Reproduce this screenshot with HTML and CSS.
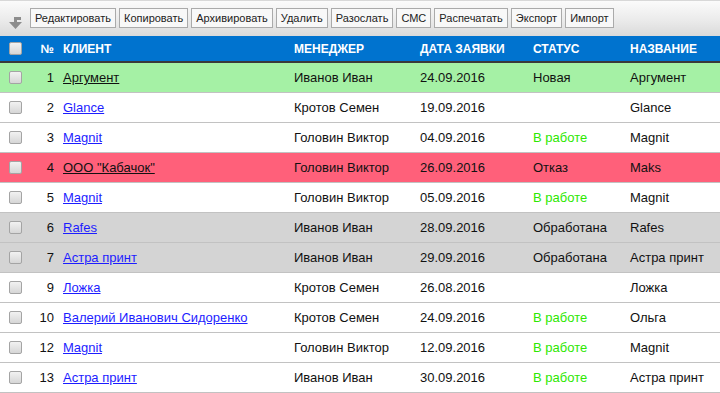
FILE: index.html
```html
<!DOCTYPE html>
<html lang="ru">
<head>
  <meta charset="UTF-8" />
  <title>Заявки</title>
  <link rel="stylesheet" href="styles.css">
</head>
<body>
  <div class="toolbar">
    <svg class="tb-icon" width="15" height="12" viewBox="0 0 15 12">
      <path d="M6 0 H13 V3 H9 V5 H14 L7.5 12 L1 5 H6 Z" fill="#8c8c8c"/>
    </svg>
    <button>Редактировать</button>
    <button>Копировать</button>
    <button>Архивировать</button>
    <button>Удалить</button>
    <button>Разослать</button>
    <button>СМС</button>
    <button>Распечатать</button>
    <button>Экспорт</button>
    <button>Импорт</button>
  </div>

  <table class="grid">
    <colgroup>
      <col style="width:29px">
      <col style="width:25px">
      <col style="width:231px">
      <col style="width:126px">
      <col style="width:113px">
      <col style="width:97px">
      <col style="width:99px">
    </colgroup>
    <thead>
      <tr>
        <th class="cb"><span class="check"></span></th>
        <th class="num">№</th>
        <th>Клиент</th>
        <th>Менеджер</th>
        <th>Дата заявки</th>
        <th>Статус</th>
        <th>Название</th>
      </tr>
    </thead>
    <tbody>
      <tr class="new">
        <td class="cb"><span class="check"></span></td>
        <td class="num">1</td>
        <td><a href="#">Аргумент</a></td>
        <td>Иванов Иван</td>
        <td>24.09.2016</td>
        <td>Новая</td>
        <td>Аргумент</td>
      </tr>
      <tr>
        <td class="cb"><span class="check"></span></td>
        <td class="num">2</td>
        <td><a href="#">Glance</a></td>
        <td>Кротов Семен</td>
        <td>19.09.2016</td>
        <td></td>
        <td>Glance</td>
      </tr>
      <tr>
        <td class="cb"><span class="check"></span></td>
        <td class="num">3</td>
        <td><a href="#">Magnit</a></td>
        <td>Головин Виктор</td>
        <td>04.09.2016</td>
        <td class="work">В работе</td>
        <td>Magnit</td>
      </tr>
      <tr class="refused">
        <td class="cb"><span class="check"></span></td>
        <td class="num">4</td>
        <td><a href="#">ООО "Кабачок"</a></td>
        <td>Головин Виктор</td>
        <td>26.09.2016</td>
        <td>Отказ</td>
        <td>Maks</td>
      </tr>
      <tr>
        <td class="cb"><span class="check"></span></td>
        <td class="num">5</td>
        <td><a href="#">Magnit</a></td>
        <td>Головин Виктор</td>
        <td>05.09.2016</td>
        <td class="work">В работе</td>
        <td>Magnit</td>
      </tr>
      <tr class="done">
        <td class="cb"><span class="check"></span></td>
        <td class="num">6</td>
        <td><a href="#">Rafes</a></td>
        <td>Иванов Иван</td>
        <td>28.09.2016</td>
        <td>Обработана</td>
        <td>Rafes</td>
      </tr>
      <tr class="done">
        <td class="cb"><span class="check"></span></td>
        <td class="num">7</td>
        <td><a href="#">Астра принт</a></td>
        <td>Иванов Иван</td>
        <td>29.09.2016</td>
        <td>Обработана</td>
        <td>Астра принт</td>
      </tr>
      <tr>
        <td class="cb"><span class="check"></span></td>
        <td class="num">9</td>
        <td><a href="#">Ложка</a></td>
        <td>Кротов Семен</td>
        <td>26.08.2016</td>
        <td></td>
        <td>Ложка</td>
      </tr>
      <tr>
        <td class="cb"><span class="check"></span></td>
        <td class="num">10</td>
        <td><a href="#">Валерий Иванович Сидоренко</a></td>
        <td>Кротов Семен</td>
        <td>24.09.2016</td>
        <td class="work">В работе</td>
        <td>Ольга</td>
      </tr>
      <tr>
        <td class="cb"><span class="check"></span></td>
        <td class="num">12</td>
        <td><a href="#">Magnit</a></td>
        <td>Головин Виктор</td>
        <td>12.09.2016</td>
        <td class="work">В работе</td>
        <td>Magnit</td>
      </tr>
      <tr>
        <td class="cb"><span class="check"></span></td>
        <td class="num">13</td>
        <td><a href="#">Астра принт</a></td>
        <td>Иванов Иван</td>
        <td>30.09.2016</td>
        <td class="work">В работе</td>
        <td>Астра принт</td>
      </tr>
    </tbody>
  </table>
</body>
</html>
```

FILE: styles.css
```css
body {
  margin: 0;
  font-family: "Liberation Sans", Arial, sans-serif;
  font-size: 13px;
  color: #111;
  background: #fff;
}
.toolbar {
  display: flex;
  align-items: flex-start;
  gap: 3px;
  height: 36px;
  box-sizing: border-box;
  padding: 7px 0 0 8px;
  border-top: 1px solid #d8d8d8;
  background: linear-gradient(#fbfbfb, #e9e9e9 60%, #dadada);
}
.tb-icon {
  margin: 9px 4px 0 0;
}
.toolbar button {
  height: 20px;
  padding: 0 4px;
  font-family: "Liberation Sans", Arial, sans-serif;
  font-size: 11px;
  color: #222;
  background: #f8f8f8;
  border: 1px solid #aaa;
  border-radius: 0;
}
.grid {
  width: 720px;
  table-layout: fixed;
  border-collapse: collapse;
}
.grid th {
  height: 25px;
  padding: 0 0 0 9px;
  background: #0073cf;
  border-bottom: 2px solid #3a3a3a;
  color: #fff;
  font-size: 12px;
  font-weight: bold;
  text-transform: uppercase;
  text-align: left;
  white-space: nowrap;
}
.grid td {
  height: 29px;
  padding: 0 0 0 9px;
  border-bottom: 1px solid #c2c2c2;
  white-space: nowrap;
}
.grid .cb {
  padding-left: 9px;
  line-height: 0;
}
.grid .num {
  padding: 0;
  text-align: right;
}
.check {
  display: inline-block;
  width: 11px;
  height: 11px;
  border: 1px solid #a4a4a4;
  border-radius: 2px;
  background: linear-gradient(#f2f2f2, #d6d6d6);
}
.grid a {
  color: #1d1dff;
}
.new td {
  background: #a5f1a5;
}
.refused td {
  background: #ff607a;
}
.done td {
  background: #d4d4d4;
}
.new a, .refused a {
  color: #111;
}
.work {
  color: #2de800;
}
```
